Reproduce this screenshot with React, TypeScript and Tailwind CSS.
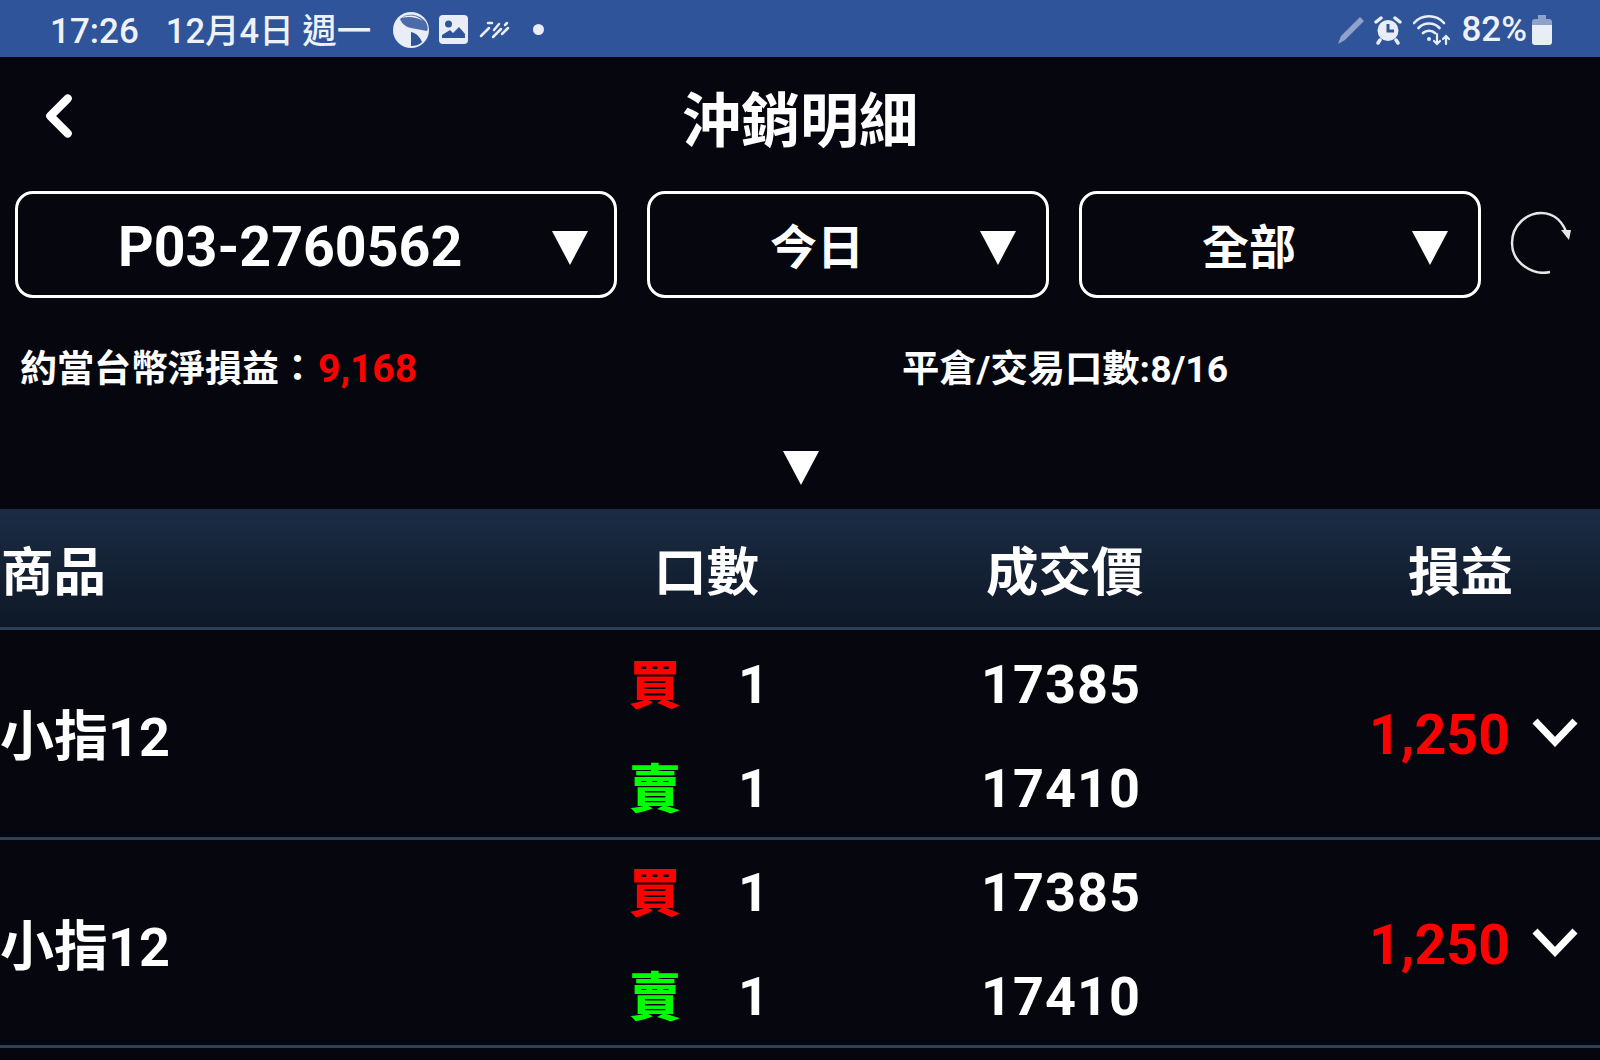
import { ChevronLeft } from "lucide-react";

function Caret({ className }: { className: string }) {
  return (
    <svg viewBox="0 0 36 34" className={className}>
      <path d="M0 0H36L18 34Z" fill="#fff" />
    </svg>
  );
}

function Select({ label, className, textClass, caretClass }: { label: string; className: string; textClass: string; caretClass: string }) {
  return (
    <div className={`flex h-[107px] items-center rounded-[18px] border-[3px] border-white ${className}`}>
      <span className={`text-white ${textClass}`}>{label}</span>
      <Caret className={`mt-[6px] h-[34px] w-[36px] ${caretClass}`} />
    </div>
  );
}

function StatusIcons() {
  return (
    <div className="ml-[22px] flex items-center">
      <svg viewBox="0 0 36 36" className="h-[36px] w-[36px]">
        <circle cx="18" cy="18" r="18" fill="#e8edf6" />
        <path d="M7 7C14 0 26 2 32 9C35 13 35 17 34 19L18 16C13 15 9 12 7 7Z" fill="#30549a" opacity="0.85" />
        <path d="M2 19L18 20C23 21 27 25 29 30C22 36 10 35 4 27C3 25 2 22 2 19Z" fill="#e8edf6" />
        <path d="M18 20C23 21 27 25 29 30C26 33 22 34 18 34Z" fill="#30549a" />
        <path d="M9 6C15 2 24 3 30 9C24 5 15 4 9 6Z" fill="#e8edf6" />
      </svg>
      <svg viewBox="0 0 29 29" className="ml-[10px] h-[29px] w-[29px]">
        <rect width="29" height="29" rx="4" fill="#e8edf6" />
        <circle cx="9.500" cy="9" r="3.500" fill="#30549a" />
        <path d="M3 23V20L11 15L14 18L20 12L26 19V23Z" fill="#30549a" />
        <path d="M3 23H26V26H3Z" fill="#e8edf6" />
      </svg>
      <svg viewBox="0 0 34 20" className="ml-[11px] h-[20px] w-[34px]" stroke="#e8edf6" strokeWidth="2.500" strokeLinecap="round" fill="none">
        <path d="M2 16L10 8M9 3H13M15 10L20 4M14 17L22 9M26 5L28 3M23 14L29 8" />
      </svg>
      <span className="ml-[20px] h-[11px] w-[11px] rounded-full bg-[#e8edf6]" />
    </div>
  );
}

function StatusRight() {
  return (
    <div className="ml-auto flex items-center pr-[48px]">
      <svg viewBox="0 0 28 30" className="h-[30px] w-[28px]">
        <path d="M23 2L27 6L8 25L1 29L4 21Z" fill="#8ea2cb" />
      </svg>
      <svg viewBox="0 0 28 30" className="ml-[9px] h-[30px] w-[28px]">
        <circle cx="14" cy="15.500" r="10.500" fill="#e8edf6" />
        <path d="M14 9V16H20" stroke="#30549a" strokeWidth="3" fill="none" />
        <path d="M2 7L7 3M26 7L21 3M6 25L4 28M22 25L24 28" stroke="#e8edf6" strokeWidth="3.500" strokeLinecap="round" />
      </svg>
      <svg viewBox="0 0 38 32" className="ml-[11px] h-[32px] w-[38px]" fill="none" stroke="#e8edf6" strokeWidth="2.600" strokeLinecap="round">
        <path d="M1 9C9 0 23 0 31 9M5.500 14C11 8 21 8 26.500 14M10 19C13 16 19 16 22 19" />
        <circle cx="16" cy="25" r="2" fill="#e8edf6" stroke="none" />
        <path d="M24 20V30M21 27L24 30L27 27M33 30V22M30 25L33 22L36 25" strokeWidth="2.200" />
      </svg>
      <span className="ml-[10px] text-[35px] font-medium leading-none text-[#eef1f8]">82%</span>
      <svg viewBox="0 0 20 30" className="ml-[5px] h-[30px] w-[20px]">
        <path d="M6 0H14V4H17Q20 4 20 7V12H0V7Q0 4 3 4H6Z" fill="#8ea2cb" />
        <path d="M0 10H20V27Q20 30 17 30H3Q0 30 0 27Z" fill="#e8edf6" />
      </svg>
    </div>
  );
}

function Leg({ side, color, price }: { side: string; color: string; price: string }) {
  return (
    <div className="flex h-[104px] shrink-0 items-center">
      <span className={`w-[101px] pl-[629px] pt-[4px] box-content text-[52px] font-black leading-none ${color}`}>{side}</span>
      <span className="ml-[8px] w-[26px] text-center text-[54px] font-bold leading-none text-white">1</span>
      <span className="ml-[217px] text-[54px] font-bold leading-none tracking-[1px] text-white">{price}</span>
    </div>
  );
}

function TradeRow({ className, offsetClass }: { className: string; offsetClass: string }) {
  return (
    <div className={`border-b-[3px] border-[#2b4257] ${className}`}>
      <div className={`relative ${offsetClass}`}>
        <span className="absolute left-0 top-[81px] text-[54px] font-bold leading-none text-white">小指12</span>
        <Leg side="買" color="text-[#ff0000]" price="17385" />
        <Leg side="賣" color="text-[#00ff00]" price="17410" />
        <span className="absolute right-[90px] top-[78px] text-[55.500px] font-bold leading-none text-[#ff0000]">1,250</span>
        <svg viewBox="0 0 46 30" className="absolute right-[22px] top-[87px] h-[30px] w-[46px]">
          <path d="M3 4L23 25L43 4" fill="none" stroke="#fff" strokeWidth="7" />
        </svg>
      </div>
    </div>
  );
}

export default function App() {
  return (
    <div className="h-[1060px] w-[1600px] overflow-hidden bg-[#05060e] font-['Roboto','Noto_Sans_CJK_TC',sans-serif]">
      <div className="flex h-[57px] items-center bg-[#30549a] pl-[50px] pt-[2px] font-medium leading-none text-[#eef1f8]">
        <span className="pt-[4px] text-[35px]">17:26</span>
        <span className="ml-[27px] pt-[4px] text-[34.500px]">12月4日 週一</span>
        <StatusIcons />
        <StatusRight />
      </div>

      <div className="relative flex h-[134px] items-center justify-center pb-[6px]">
        <ChevronLeft className="absolute left-[24px] top-[24px] h-[70px] w-[70px] text-white" strokeWidth={2.8} />
        <h1 className="text-[59px] font-bold leading-none text-white">沖銷明細</h1>
      </div>

      <div className="flex items-center pl-[15px]">
        <Select label="P03-2760562" className="w-[602px]" textClass="ml-[100px] pt-[6px] text-[55.500px] font-bold leading-none" caretClass="ml-[90px]" />
        <Select label="今日" className="ml-[30px] w-[402px]" textClass="ml-[120px] pt-[5px] text-[47px] font-bold leading-none" caretClass="ml-[116px]" />
        <Select label="全部" className="ml-[30px] w-[402px]" textClass="ml-[120px] pt-[5px] text-[47px] font-bold leading-none" caretClass="ml-[116px]" />
        <svg viewBox="0 0 64 64" className="ml-[28px] h-[64px] w-[64px] -translate-y-[3px]" fill="none" stroke="#e6e6e6" strokeWidth="2.500">
          <path d="M41 62C24 66 3 53 3 33C3 15 18 3 32 3C46 3 55 13 59 27" />
          <path d="M52 20L60 30L62 20Z" fill="#e6e6e6" stroke="none" />
        </svg>
      </div>

      <div className="flex h-[142px] items-center pl-[20px] pt-[1px] text-[37px] font-bold leading-none text-white">
        <span className="w-[882px]">
          約當台幣淨損益：<span className="ml-[2px] text-[39px] text-[#ff0000]">9,168</span>
        </span>
        <span className="text-[37.300px]">平倉/交易口數:8/16</span>
      </div>

      <div className="flex h-[69px] justify-center pl-[1px] pt-[11px]">
        <Caret className="h-[34px] w-[38px]" />
      </div>

      <div className="flex h-[121px] items-center border-b-[3px] border-[#2b4257] bg-gradient-to-b from-[#1b2c45] to-[#0e1826] pt-[11px] text-[52.500px] font-bold leading-none text-white">
        <span className="w-[654px] pl-[1px]">商品</span>
        <span className="w-[332px]">口數</span>
        <span className="w-[422px]">成交價</span>
        <span>損益</span>
      </div>

      <TradeRow className="h-[210px]" offsetClass="pt-[3px]" />
      <TradeRow className="h-[208px]" offsetClass="pt-[1px]" />
    </div>
  );
}
